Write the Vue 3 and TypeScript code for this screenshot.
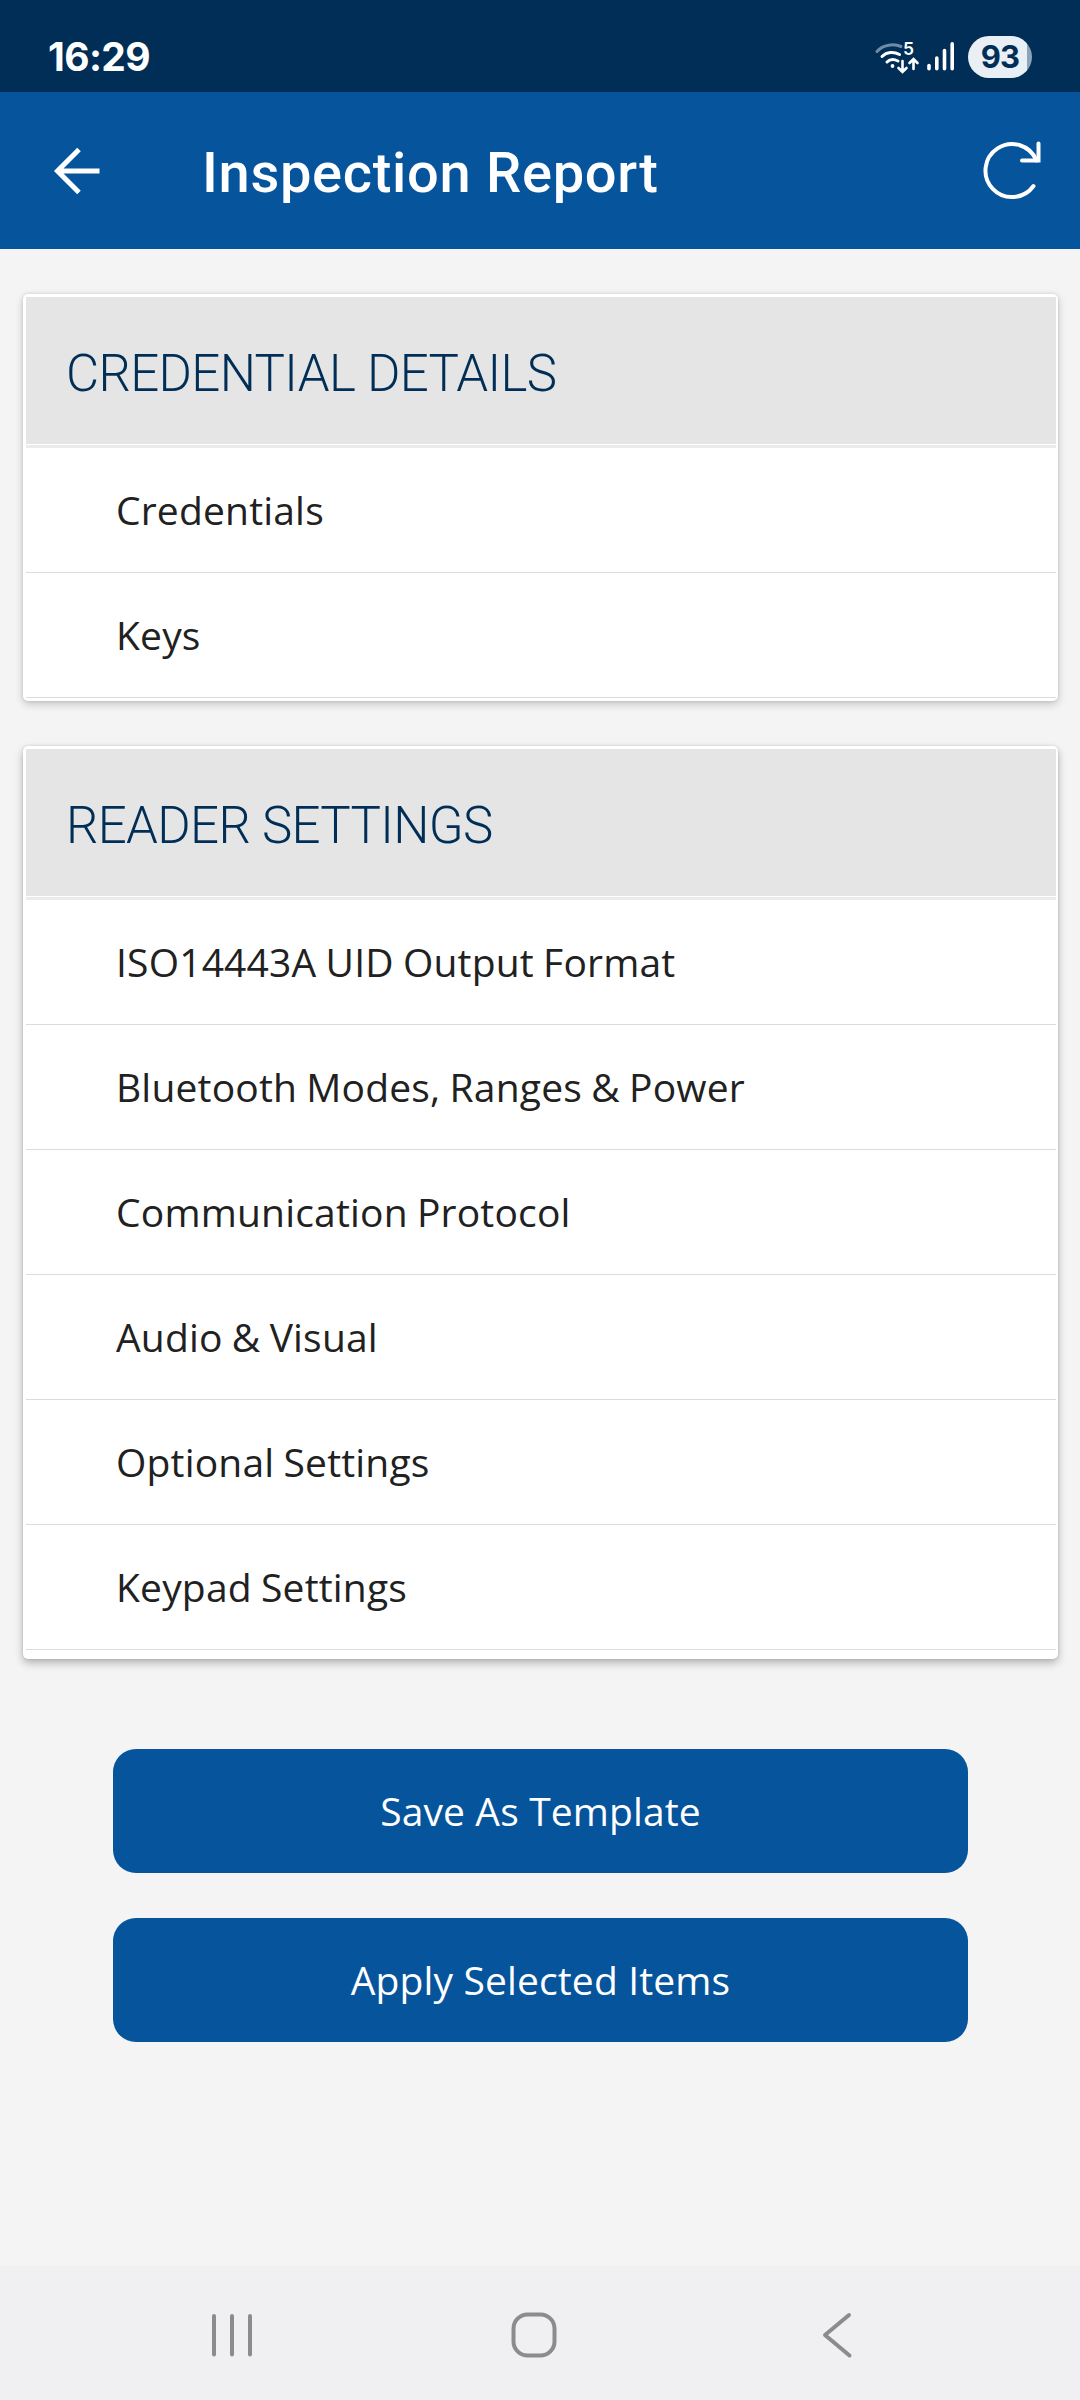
<script setup lang="ts">
interface Section {
  title: string
  items: string[]
}

const sections: Section[] = [
  { title: 'CREDENTIAL DETAILS', items: ['Credentials', 'Keys'] },
  {
    title: 'READER SETTINGS',
    items: [
      'ISO14443A UID Output Format',
      'Bluetooth Modes, Ranges & Power',
      'Communication Protocol',
      'Audio & Visual',
      'Optional Settings',
      'Keypad Settings',
    ],
  },
]

const actions: string[] = ['Save As Template', 'Apply Selected Items']
</script>

<template>
  <div class="screen">
    <div class="status">
      <span class="clock">16:29</span>
      <div class="indicators">
        <svg class="wifi" width="46" height="46" viewBox="0 -6 46 46" fill="none" stroke="#fff" stroke-width="3" stroke-linecap="round">
          <path d="M3 11.500 C9 4.500 20 3.500 27 6.500" stroke="#6f8ba6" />
          <path d="M8 16.500 C13 11.500 20 11.500 25.500 14.500" />
          <path d="M13 22 C16 19 20 19 24 21" />
          <circle cx="18.500" cy="26" r="1.900" fill="#fff" stroke="none" />
          <path d="M28.500 21 V31 M24.500 28 L28.500 32 L32.500 28" stroke-width="2.600" />
          <path d="M39.500 29 V20 M35.500 23 L39.500 19 L43.500 23" stroke-width="2.600" />
          <text x="29" y="15" fill="#fff" stroke="none" font-size="17.500" font-weight="600">5</text>
        </svg>
        <svg class="signal" width="28" height="30" viewBox="0 0 28 30" fill="none" stroke="#fff" stroke-width="3.600" stroke-linecap="round">
          <path d="M2 23.500 V26.700 M9.800 16 V26.700 M17.500 8.500 V26.700 M25.200 1.900 V26.700" />
        </svg>
        <div class="battery"><span>93</span></div>
      </div>
    </div>

    <header class="appbar">
      <svg class="back" width="48" height="48" viewBox="0 0 48 48" fill="none" stroke="#fff" stroke-width="5">
        <path d="M26 2.500 L4.500 24 L26 45.500 M4.500 24 H46.500" />
      </svg>
      <h1>Inspection Report</h1>
      <svg class="refresh" width="60" height="60" viewBox="0 0 60 60" fill="none" stroke="#fff" stroke-width="4" stroke-linecap="round">
        <path d="M51.500 46 A26.500 26.500 0 1 1 54.500 20.500" />
        <path d="M56.500 3.500 V20.500 H40" />
      </svg>
    </header>

    <main>
      <section v-for="s in sections" :key="s.title" class="card">
        <h2>{{ s.title }}</h2>
        <ul>
          <li v-for="item in s.items" :key="item">{{ item }}</li>
        </ul>
      </section>
      <div class="actions">
        <button v-for="a in actions" :key="a" type="button">{{ a }}</button>
      </div>
    </main>

    <nav>
      <svg width="46" height="48" viewBox="0 0 46 48" stroke="#8c8c8e" stroke-width="4" stroke-linecap="round">
        <path d="M5 5 V43.500 M23 5 V43.500 M41 5 V43.500" />
      </svg>
      <svg class="home" width="48" height="48" viewBox="0 0 48 48" fill="none" stroke="#8c8c8e" stroke-width="4">
        <rect x="3.500" y="3.500" width="41" height="41" rx="14" />
      </svg>
      <svg width="34" height="48" viewBox="0 0 34 48" fill="none" stroke="#8c8c8e" stroke-width="4" stroke-linecap="round" stroke-linejoin="round">
        <path d="M29 4 L5 24 L29.500 44.500" />
      </svg>
    </nav>
  </div>
</template>

<style>
body {
  margin: 0;
  background: #f4f4f4;
}
</style>

<style scoped>
.screen {
  width: 1080px;
  height: 2400px;
  display: flex;
  flex-direction: column;
  background: #f4f4f4;
  font-family: "Open Sans", sans-serif;
  overflow: hidden;
}
.status {
  height: 92px;
  flex: none;
  box-sizing: border-box;
  padding: 22px 48px 0 48px;
  display: flex;
  justify-content: space-between;
  align-items: center;
  background: #002e56;
  color: #fff;
  font-family: Inter, sans-serif;
}
.clock {
  font-size: 39px;
  line-height: 48px;
  font-weight: 700;
  letter-spacing: -0.6px;
}
.indicators {
  display: flex;
  align-items: center;
}
.wifi {
  margin-right: 7px;
}
.signal {
  margin-right: 13px;
}
.battery {
  width: 64px;
  height: 42px;
  border-radius: 21px;
  overflow: hidden;
  background: linear-gradient(90deg, #e9eff5 59px, #8ca3b8 59px);
  color: #002e56;
  display: flex;
  align-items: center;
  justify-content: center;
}
.battery span {
  font-size: 31px;
  line-height: 42px;
  font-weight: 700;
  letter-spacing: -0.8px;
}
.appbar {
  height: 157px;
  flex: none;
  box-sizing: border-box;
  padding: 0 38px 0 53px;
  display: flex;
  align-items: center;
  background: #05549c;
  color: #fff;
}
.refresh {
  margin-bottom: 2px;
}
h1 {
  margin: 5px 0 0 101px;
  flex: 1;
  font: 500 56px/66px Roboto, sans-serif;
  letter-spacing: 0.7px;
  white-space: nowrap;
}
main {
  flex: 1;
  padding: 45px 22px 0 23px;
}
.card {
  margin-bottom: 45px;
  padding: 3px 2px 3px 3px;
  border-radius: 5px;
  background: #fff;
  box-shadow: 0 3px 8px rgba(0, 0, 0, 0.2), 0 0 3px rgba(0, 0, 0, 0.12);
}
.card:nth-child(2) {
  margin-bottom: 90px;
  padding-bottom: 9px;
  box-shadow: 0 4px 9px rgba(0, 0, 0, 0.27), 0 0 3px rgba(0, 0, 0, 0.12);
}
h2 {
  margin: 0 0 1px;
  height: 147px;
  padding-left: 40px;
  background: #e5e5e5;
  color: #002e56;
  font: 300 51px/154px Roboto, sans-serif;
  letter-spacing: -0.66px;
}
ul {
  margin: 0;
  padding: 0;
  list-style: none;
  border-top: 3px solid #ebebeb;
}
li {
  height: 124px;
  padding-left: 90px;
  border-bottom: 1px solid #dcdcdc;
  color: #212121;
  font-size: 39px;
  line-height: 124px;
  letter-spacing: 0.18px;
  word-spacing: -1.1px;
}
.actions {
  display: flex;
  flex-direction: column;
  gap: 45px;
  padding: 0 90px;
}
button {
  height: 124px;
  padding: 0;
  border: 0;
  border-radius: 23px;
  background: #05549c;
  color: #fff;
  font: 400 39px/124px "Open Sans", sans-serif;
  letter-spacing: 0.13px;
}
nav {
  height: 134px;
  flex: none;
  box-sizing: border-box;
  padding: 4px 226px 0 209px;
  display: flex;
  align-items: center;
  background: #f0f0f2;
  justify-content: space-between;
}
.home {
  margin-right: 8px;
}
</style>
